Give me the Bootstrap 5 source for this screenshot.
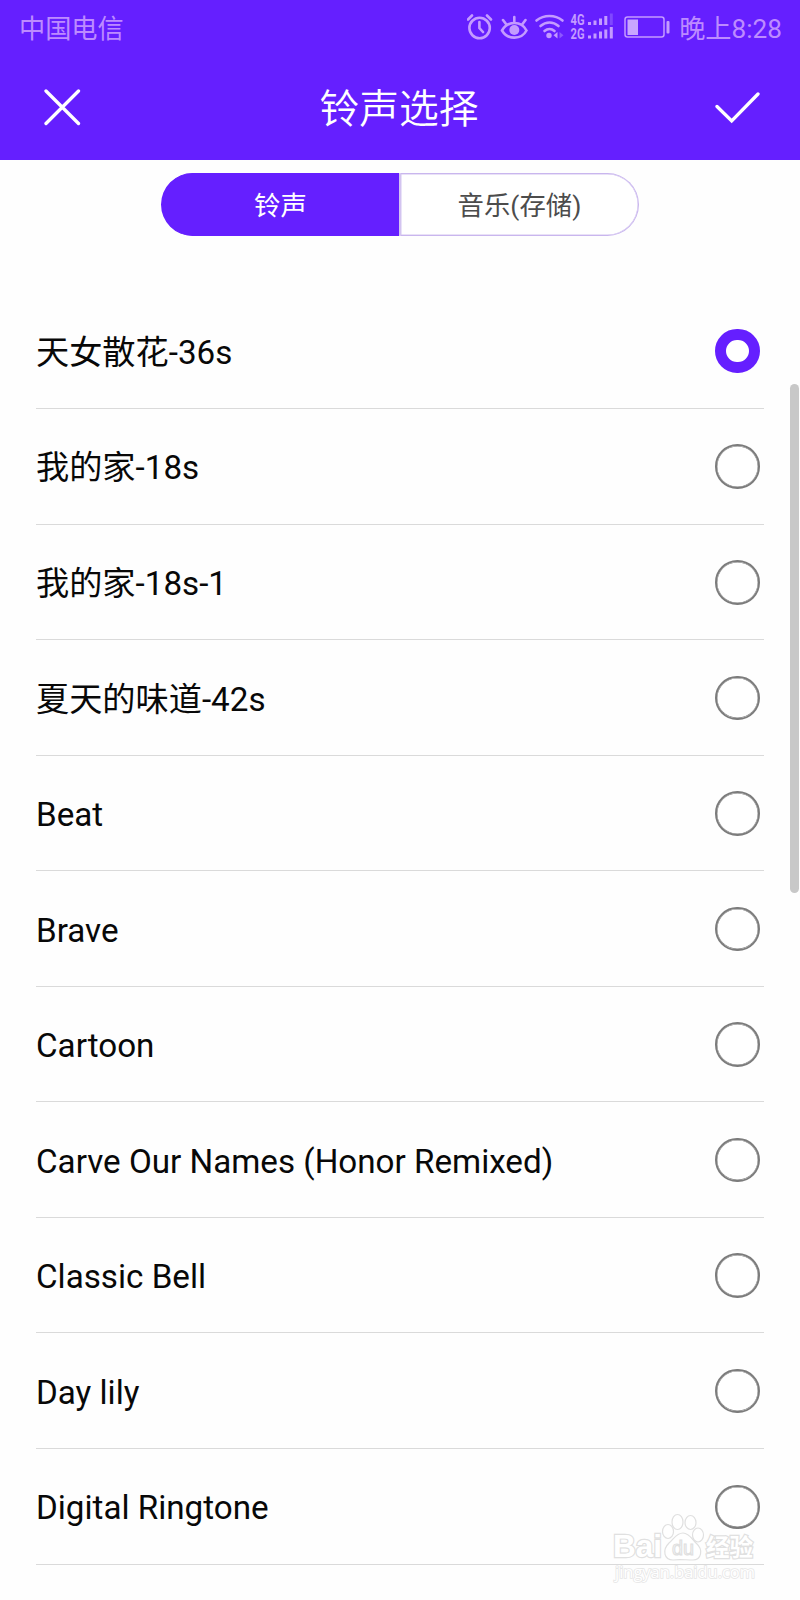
<!DOCTYPE html>
<html lang="zh-CN">
<head>
<meta charset="utf-8">
<meta name="viewport" content="width=device-width, initial-scale=1">
<title>铃声选择</title>
<link href="https://cdn.jsdelivr.net/npm/bootstrap@5.3.0/dist/css/bootstrap.min.css" rel="stylesheet">
<style>
  :root { --accent: #651fff; --status: #bd8bff; }
  body { font-family: Roboto, "Noto Sans CJK SC", sans-serif; background: #fefefe; color: #080808; height: 1600px; overflow: hidden; }
  .top-area { background: var(--accent); height: 160px; }
  .status-row { height: 56px; padding: 0 18px 0 19px; color: var(--status); font-size: 26.2px; line-height: 56px; }
  .status-row span { padding-top: 1px; }
  .status-row svg { display: block; }
  .title-row { height: 104px; padding: 0 40px 0 44px; }
  .title-row h1 { font-size: 39.8px; font-weight: 350; line-height: 104px; padding: 3px 0 0 1px; }
  .switcher { width: 478px; height: 63px; margin-top: 13px; }
  .switcher .btn { font-size: 26.4px; line-height: 1; padding: 3px 0 0; border: 1px solid #c9b6ee; border-left: 2px solid #d3c4f0; color: #4c4c4c; border-radius: 0 32px 32px 0; background: #fff; box-shadow: inset 0 0 0 .5px #d3c4f0; flex: 0 0 240px; }
  .switcher .btn.active { background: var(--accent); border-color: var(--accent); color: #fff; border-radius: 32px 0 0 32px; box-shadow: none; flex-basis: 238px; }
  .switcher .btn + .btn { margin-left: 0 !important; }
  .tones { margin: 57.4px 36px 0; }
  .tone { height: 115.57px; font-size: 33.2px; line-height: 1; border-bottom: 1px solid #dadada; padding: 1px 4.500px 0 0; }
  .tone span { padding-top: 2.500px; }
  .tone .form-check-input { width: 44.5px; height: 44.5px; border: 2px solid #7c7c7c; box-shadow: inset 0 0 0 .4px #7c7c7c; margin: 0; background-color: #fff; }
  .tone .form-check-input:checked { border: 11px solid var(--accent); background: #fff; box-shadow: none; }
  .scroll-thumb { right: 1px; top: 384px; width: 9px; height: 509px; background: #c8c8c8; border-radius: 5px; }
  .watermark { left: 608px; top: 1508px; }
</style>
</head>
<body class="position-relative">
<header class="top-area">
  <div class="status-row d-flex align-items-center justify-content-between">
    <span>中国电信</span>
    <div class="d-flex align-items-center">
      <svg width="212" height="56" viewBox="0 0 212 56" fill="none" stroke="#c49bff" stroke-width="2.600" stroke-linecap="round">
        <!-- alarm -->
        <circle cx="12.600" cy="28" r="10.200"/><path d="M12.400 22v6l3.600 4M1 19.500l4-4M24 19.500l-4-4"/>
        <!-- eye -->
        <path d="M35 30.500c5.500-10 19.500-10 24.500 0c-5 9.500-19 9.500-24.500 0z"/><circle cx="47.300" cy="30" r="5" fill="#c49bff" stroke="none"/><path d="M47.300 17v4.500M36 20l3 4M58.500 20l-3 4"/>
        <!-- wifi -->
        <path d="M69.500 20.500c7.500-6 18.500-6 26 0M73.500 26c5.500-4.700 12.500-4.700 18 0M77.500 31c3-2.500 7-2.500 10 0"/>
        <circle cx="82" cy="35.500" r="2.700" fill="#c49bff" stroke="none"/><path d="M90.500 32v6.500l-4-3.200z" fill="#c49bff" stroke="none"/><path d="M92.500 32v6.500l4-3.200z" fill="#8d58ff" stroke="none"/>
        <!-- signal -->
        <g fill="#c49bff" stroke="none">
          <text x="103.500" y="25" font-size="14" font-weight="700" textLength="14" lengthAdjust="spacingAndGlyphs">4G</text>
          <text x="103.500" y="38.700" font-size="14" font-weight="700" textLength="14" lengthAdjust="spacingAndGlyphs">2G</text>
          <path d="M121 22h3v3h-3zM126.500 20.500h3v4.500h-3zM132 18.500h3v6.500h-3zM137.300 16h3v9h-3zM121 35.500h3v3h-3zM126.500 33.500h3v5h-3zM132 31.500h3v7h-3zM137.300 29.500h3v9h-3zM142.800 27h3v11.500h-3z"/>
          <path d="M142.800 13.500h3v11.500h-3z" fill="#8048ff"/>
        </g>
        <!-- battery -->
        <rect x="158" y="17" width="39" height="20" rx="2.500" stroke-width="1.500"/><rect x="160.500" y="19.500" width="10.500" height="15.500" fill="#c9a6ff" stroke="none"/><rect x="199.500" y="21" width="3" height="12.500" rx="1" fill="#c49bff" stroke="none"/>
      </svg>
      <span>晚上8:28</span>
    </div>
  </div>
  <div class="title-row d-flex align-items-center justify-content-between text-white">
    <svg width="38" height="38" viewBox="0 0 38 38" fill="none" stroke="#fff" stroke-width="3.300" stroke-linecap="round"><path d="M2 2L34.500 34.500M34.500 2L2 34.500"/></svg>
    <h1 class="m-0">铃声选择</h1>
    <svg width="45" height="32" viewBox="0 0 45 32" fill="none" stroke="#fff" stroke-width="3.300" stroke-linecap="round"><path d="M2 14.500L16.700 29L43 2"/></svg>
  </div>
</header>
<main>
  <div class="switcher btn-group d-flex mx-auto" role="group">
    <button type="button" class="btn active">铃声</button>
    <button type="button" class="btn">音乐(存储)</button>
  </div>
  <div class="tones">
    <label class="tone d-flex align-items-center justify-content-between"><span>天女散花-36s</span><input class="form-check-input" type="radio" name="tone" checked></label>
    <label class="tone d-flex align-items-center justify-content-between"><span>我的家-18s</span><input class="form-check-input" type="radio" name="tone"></label>
    <label class="tone d-flex align-items-center justify-content-between"><span>我的家-18s-1</span><input class="form-check-input" type="radio" name="tone"></label>
    <label class="tone d-flex align-items-center justify-content-between"><span>夏天的味道-42s</span><input class="form-check-input" type="radio" name="tone"></label>
    <label class="tone d-flex align-items-center justify-content-between"><span>Beat</span><input class="form-check-input" type="radio" name="tone"></label>
    <label class="tone d-flex align-items-center justify-content-between"><span>Brave</span><input class="form-check-input" type="radio" name="tone"></label>
    <label class="tone d-flex align-items-center justify-content-between"><span>Cartoon</span><input class="form-check-input" type="radio" name="tone"></label>
    <label class="tone d-flex align-items-center justify-content-between"><span>Carve Our Names (Honor Remixed)</span><input class="form-check-input" type="radio" name="tone"></label>
    <label class="tone d-flex align-items-center justify-content-between"><span>Classic Bell</span><input class="form-check-input" type="radio" name="tone"></label>
    <label class="tone d-flex align-items-center justify-content-between"><span>Day lily</span><input class="form-check-input" type="radio" name="tone"></label>
    <label class="tone d-flex align-items-center justify-content-between"><span>Digital Ringtone</span><input class="form-check-input" type="radio" name="tone"></label>
  </div>
</main>
<div class="scroll-thumb position-absolute"></div>
<svg class="watermark position-absolute" width="160" height="76" viewBox="0 0 160 76" fill="#fff" stroke="#e0e0e0" stroke-width="1.200">
  <g font-weight="700" stroke-width="2.400" paint-order="stroke">
    <text x="5" y="49" font-size="32" font-family="Liberation Sans, sans-serif" textLength="49" lengthAdjust="spacingAndGlyphs">Bai</text>
    <text x="98" y="48" font-size="24" font-family="Noto Sans CJK SC, sans-serif" textLength="47" lengthAdjust="spacingAndGlyphs">经验</text>
  </g>
  <ellipse cx="60" cy="23.500" rx="5.500" ry="7"/><ellipse cx="69.500" cy="14" rx="5.500" ry="7.500"/><ellipse cx="82.500" cy="14.500" rx="5.500" ry="7"/><ellipse cx="90" cy="27" rx="5.500" ry="7"/>
  <path d="M75 25c6 0 9 6 13 10c8 7 5 17-3 17c-7 0-14-1-20 0c-9 0-11-10-4-17c5-4 7-10 14-10z"/>
  <text x="64" y="47" font-size="21" font-family="Liberation Sans, sans-serif" textLength="22" lengthAdjust="spacingAndGlyphs">du</text>
  <text x="7" y="70" font-size="16.500" font-family="Open Sans, sans-serif" textLength="140" lengthAdjust="spacingAndGlyphs" stroke="#e6e6e6" stroke-width="1.600" paint-order="stroke">jingyan.baidu.com</text>
</svg>
<script src="https://cdn.jsdelivr.net/npm/bootstrap@5.3.0/dist/js/bootstrap.bundle.min.js"></script>
</body>
</html>
